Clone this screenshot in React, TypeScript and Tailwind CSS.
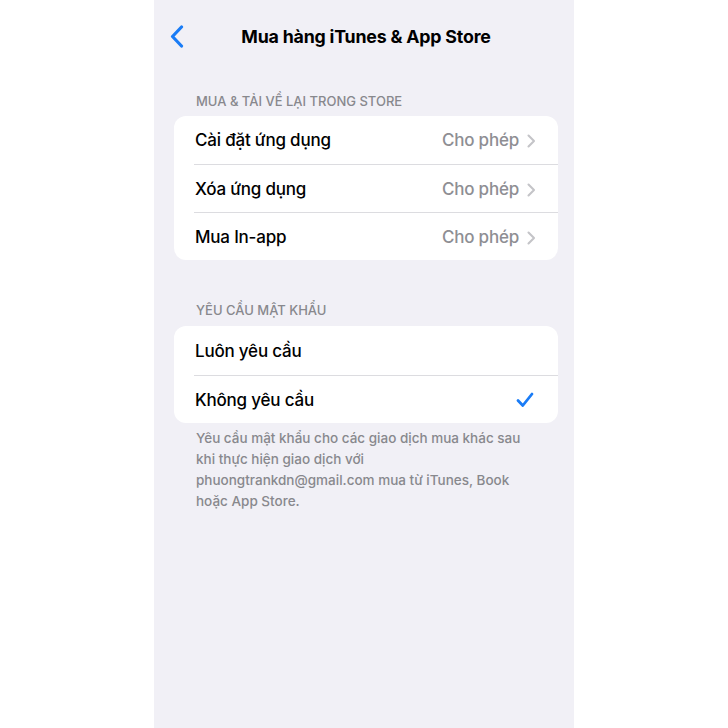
const purchaseRows = [
  { label: "Cài đặt ứng dụng", value: "Cho phép" },
  { label: "Xóa ứng dụng", value: "Cho phép" },
  { label: "Mua In-app", value: "Cho phép" },
];

const passwordRows = [
  { label: "Luôn yêu cầu", checked: false },
  { label: "Không yêu cầu", checked: true },
];

function SectionTitle({ children }: { children: string }) {
  return (
    <div className="pl-[42px] text-[13px] leading-4 font-medium text-[#88888d] uppercase">
      {children}
    </div>
  );
}

export default function App() {
  return (
    <div
      className="w-full h-[728px] bg-white flex justify-center"
      style={{ fontFamily: "Inter, 'Noto Sans', sans-serif" }}
    >
      <div className="w-[420px] h-full bg-[#f1f0f6]">
        {/* Nav bar */}
        <div className="relative h-[74px] flex items-center justify-center">
          <button className="absolute left-[11px] top-[21px] p-1">
            <svg width="16" height="24" viewBox="0 0 16 24" fill="none">
              <path
                d="M12.5 2 L3.5 11.5 L12.5 21"
                stroke="#1a7cf6"
                strokeWidth="3.2"
                strokeLinecap="round"
                strokeLinejoin="round"
              />
            </svg>
          </button>
          <h1 className="text-[17.8px] font-bold text-black tracking-[-0.2px] pl-1">
            Mua hàng iTunes &amp; App Store
          </h1>
        </div>

        {/* Section 1 */}
        <div className="mt-[19px]">
          <SectionTitle>Mua &amp; Tải về lại trong Store</SectionTitle>
          <div className="mt-[7px] ml-[20px] mr-[16px] bg-white rounded-[12px] overflow-hidden">
            {purchaseRows.map((row, i) => (
              <div key={row.label} className="ml-[20px]">
                <div
                  className={`h-[48px] pt-[2px] flex items-center pr-[22px] ${
                    i > 0 ? "border-t border-[#dcdce0]" : ""
                  }`}
                >
                  <span className="flex-1 pl-[1px] text-[17px] font-medium text-black tracking-[-0.2px]">
                    {row.label}
                  </span>
                  <span className="text-[17px] font-medium text-[#8e8e93] tracking-[-0.2px]">
                    {row.value}
                  </span>
                  <svg className="ml-[8px]" width="9" height="14" viewBox="0 0 9 14" fill="none">
                    <path
                      d="M1.5 1.5 L7 7 L1.5 12.5"
                      stroke="#c4c4c8"
                      strokeWidth="2.1"
                      strokeLinecap="round"
                      strokeLinejoin="round"
                    />
                  </svg>
                </div>
              </div>
            ))}
          </div>
        </div>

        {/* Section 2 */}
        <div className="mt-[42px]">
          <SectionTitle>Yêu cầu mật khẩu</SectionTitle>
          <div className="mt-[8px] ml-[20px] mr-[16px] bg-white rounded-[12px] overflow-hidden">
            {passwordRows.map((row, i) => (
              <div key={row.label} className="ml-[20px]">
                <div
                  className={`h-[48.5px] pt-[2px] flex items-center pr-[24px] ${
                    i > 0 ? "border-t border-[#dcdce0]" : ""
                  }`}
                >
                  <span className="flex-1 pl-[1px] text-[17px] font-medium text-black tracking-[-0.2px]">
                    {row.label}
                  </span>
                  {row.checked && (
                    <svg width="18" height="16" viewBox="0 0 18 16" fill="none">
                      <path
                        d="M2 8.5 L6.8 13.5 L16 2"
                        stroke="#1a7cf6"
                        strokeWidth="2.8"
                        strokeLinecap="round"
                        strokeLinejoin="round"
                      />
                    </svg>
                  )}
                </div>
              </div>
            ))}
          </div>
          <p className="mt-[5px] pl-[42px] pr-[30px] text-[13.5px] leading-[21px] font-medium text-[#88888d]">
            <span className="block">Yêu cầu mật khẩu cho các giao dịch mua khác sau</span>
            <span className="block">khi thực hiện giao dịch với</span>
            <span className="block">phuongtrankdn@gmail.com mua từ iTunes, Book</span>
            <span className="block">hoặc App Store.</span>
          </p>
        </div>
      </div>
    </div>
  );
}
